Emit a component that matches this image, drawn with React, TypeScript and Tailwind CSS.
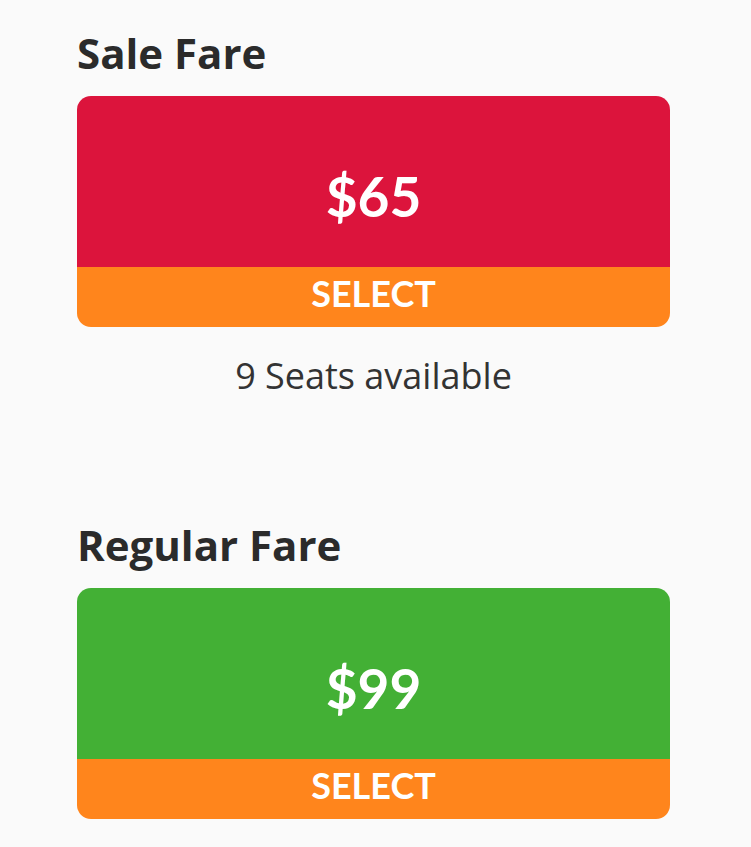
import React from "react"

type Fare = {
  title: string
  price: string
  tone: string
  seats?: string
}

const fares: Fare[] = [
  { title: "Sale Fare", price: "$65", tone: "bg-[#dc143c]", seats: "9 Seats available" },
  { title: "Regular Fare", price: "$99", tone: "bg-[#43b035]" },
]

function FareCard({ fare }: { fare: Fare }) {
  return (
    <section className="flex flex-col">
      <h2 className="text-[42px] font-bold leading-none text-[#2b2b2b] font-['Open_Sans',sans-serif]">
        {fare.title}
      </h2>
      <div className="mt-[22px] overflow-hidden rounded-[14px]">
        <div
          className={`flex h-[171px] justify-center pt-[73px] ${fare.tone} font-['Lato',sans-serif] text-[55px] font-bold leading-none text-white`}
        >
          {fare.price}
        </div>
        <button
          type="button"
          className="flex h-[60px] w-full justify-center bg-[#ff851c] pt-[8px] font-['Lato',sans-serif] text-[36px] font-bold leading-none text-white"
        >
          SELECT
        </button>
      </div>
      {fare.seats && (
        <div className="mt-[31px] text-center font-['Open_Sans',sans-serif] text-[36px] leading-none text-[#333]">
          {fare.seats}
        </div>
      )}
    </section>
  )
}

export default function App() {
  return (
    <div className="min-h-[847px] w-full bg-[#fafafa]">
      <div className="flex w-[670px] flex-col gap-[130px] pl-[77px] pt-[32px]">
        {fares.map((f) => (
          <FareCard key={f.title} fare={f} />
        ))}
      </div>
    </div>
  )
}
